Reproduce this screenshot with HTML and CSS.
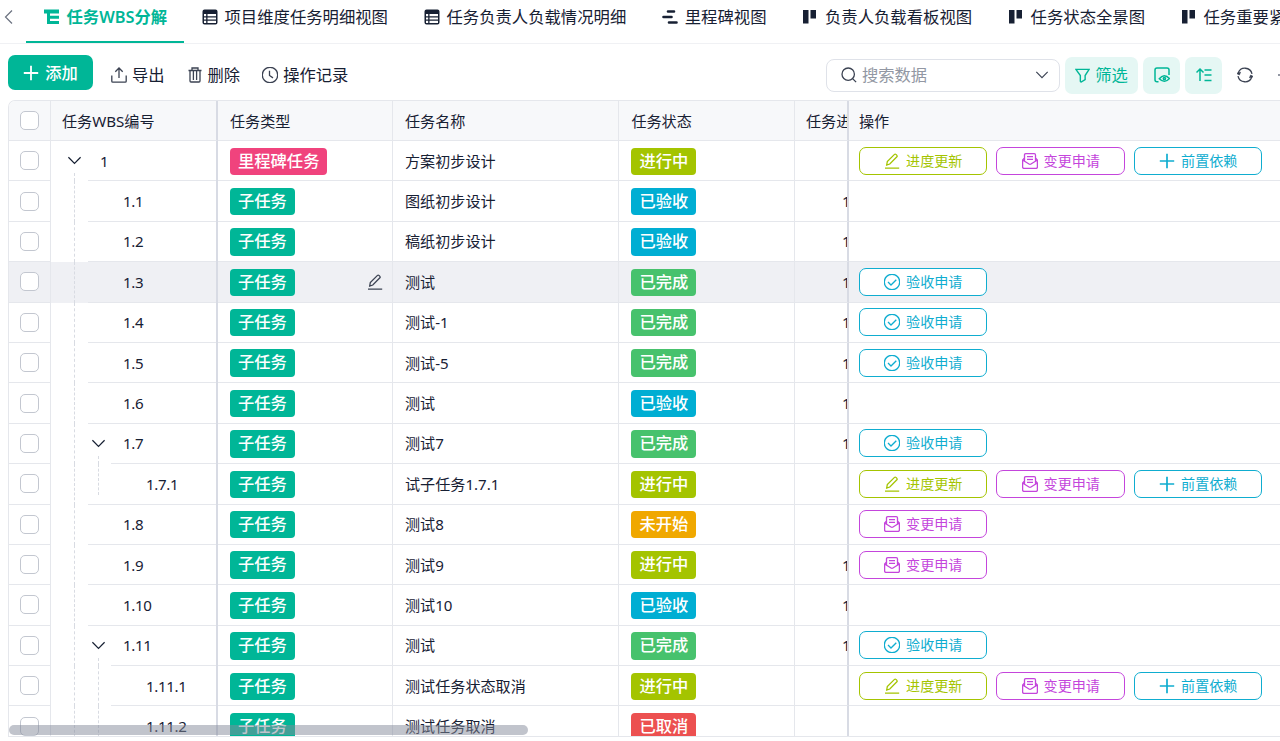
FILE: index.html
```html
<!DOCTYPE html>
<html lang="zh-CN">
<head>
    <meta charset="UTF-8">
    <title>任务WBS分解</title>
    <link rel="stylesheet" href="styles.css">
</head>
<body>
    <svg class="sprite">
        <symbol id="i-tree" viewBox="0 0 16 16"><path d="M0 .5h15v4H6v2.300h9v3H6v2.200h9v3H3V4.500H0z" fill="currentColor"/></symbol>
        <symbol id="i-grid" viewBox="0 0 16 16"><path fill="currentColor" fill-rule="evenodd" d="M2.500.5h11a2 2 0 0 1 2 2v11a2 2 0 0 1-2 2h-11a2 2 0 0 1-2-2v-11a2 2 0 0 1 2-2zM2 5v2.200h2.200V5zm3.500 0v2.200H14V5zM2 8.500v2h2.200v-2zm3.500 0v2H14v-2zM2 11.800V14h2.200v-2.200zm3.500 0V14H14v-2.200z"/></symbol>
        <symbol id="i-gantt" viewBox="0 0 16 16"><path d="M6 2.500h6M1.500 8h8M7 13.500h7.500" fill="none" stroke="currentColor" stroke-width="2.600" stroke-linecap="round"/></symbol>
        <symbol id="i-board" viewBox="0 0 16 16"><path d="M1 1h5.500v13.500H1zM8.500 1H14v8.500H8.500z" fill="currentColor"/></symbol>
        <symbol id="i-plus" viewBox="0 0 16 16"><path d="M8 .8v14.400M.8 8h14.400"/></symbol>
        <symbol id="i-export" viewBox="0 0 16 16"><path d="M8 11V1.200M4.300 4.700L8 1l3.700 3.700M.8 8.500v5.700q0 1 1 1h12.400q1 0 1-1V8.500"/></symbol>
        <symbol id="i-trash" viewBox="0 0 16 16"><path d="M1.500 3.500h13M5 3.500V1h6v2.500M3 3.500V14q0 1 1 1h8q1 0 1-1V3.500M6.400 3.500v9.500M9.600 3.500v9.500"/></symbol>
        <symbol id="i-clock" viewBox="0 0 16 16"><circle cx="8" cy="8" r="7.700"/><path d="M7.500 3.800v4.700l3.500 2.400"/></symbol>
        <symbol id="i-search" viewBox="0 0 16 16"><circle cx="7.200" cy="7.200" r="6.200"/><path d="M11.600 11.600l3.500 3.500"/></symbol>
        <symbol id="i-down" viewBox="0 0 16 16"><path d="M1.500 4.500L8 11l6.500-6.500"/></symbol>
        <symbol id="i-left" viewBox="0 0 16 16"><path d="M11 1.500L4.500 8l6.500 6.500"/></symbol>
        <symbol id="i-filter" viewBox="0 0 16 16"><path d="M1 1.500h14L10.800 8v4.500L6.500 15q-.8 0-.8-.8V8z"/></symbol>
        <symbol id="i-view" viewBox="0 0 16 16"><path d="M4.500 14.800H3q-2 0-2-2V3q0-2 2-2h10q2 0 2 2v5M5.300 11.800q4.700-6 10.200-.3-5 5.500-10.200.3z"/><circle cx="10.400" cy="11.500" r="1.100"/></symbol>
        <symbol id="i-sort" viewBox="0 0 16 16"><path d="M4 14V2.200M.5 5.500L4 2l3.500 3.500M8.500 3h7M8.500 8h7M8.500 13.500h7"/></symbol>
        <symbol id="i-refresh" viewBox="0 0 16 16"><path d="M1.200 6A7.200 7.200 0 0 1 15 6.800M14.800 10A7.200 7.200 0 0 1 1 9.200"/><path d="M-.6 6.300l4.200-1.100-1.200 2.800zM16.600 9.700l-4.200 1.100 1.200-2.800z" fill="currentColor" stroke-width=".6"/></symbol>
        <symbol id="i-edit" viewBox="0 0 16 16"><path d="M1 15.200h14.200M2.700 12l.6-3.400L10.500 1.400q.7-.7 1.400 0l1 1q.7.700 0 1.400L5.800 11z"/></symbol>
        <symbol id="i-mail" viewBox="0 0 16 16"><path d="M2.500 5L.6 7v7q0 1.400 1.400 1.400h12q1.400 0 1.400-1.400V7l-1.900-2M2.500 8.200V2Q2.500.7 3.800.7h8.400q1.300 0 1.300 1.300v6.200M.6 7l6.400 4q1 .7 2 0l6.400-4M5 3.700h6M5 6.300h6"/></symbol>
        <symbol id="i-check" viewBox="0 0 16 16"><circle cx="8" cy="8" r="7.700"/><path d="M4 8l3 3 5.300-5.300"/></symbol>
    </svg>

    <nav class="tabs">
        <svg class="icon tabs-prev"><use href="#i-left"/></svg>
        <div class="tab active"><svg class="icon"><use href="#i-tree"/></svg>任务WBS分解</div>
        <div class="tab"><svg class="icon"><use href="#i-grid"/></svg>项目维度任务明细视图</div>
        <div class="tab"><svg class="icon"><use href="#i-grid"/></svg>任务负责人负载情况明细</div>
        <div class="tab"><svg class="icon"><use href="#i-gantt"/></svg>里程碑视图</div>
        <div class="tab"><svg class="icon"><use href="#i-board"/></svg>负责人负载看板视图</div>
        <div class="tab"><svg class="icon"><use href="#i-board"/></svg>任务状态全景图</div>
        <div class="tab"><svg class="icon"><use href="#i-board"/></svg>任务重要紧急视图</div>
    </nav>

    <div class="toolbar">
        <button class="btn-add"><svg class="icon"><use href="#i-plus"/></svg>添加</button>
        <div class="tool"><svg class="icon"><use href="#i-export"/></svg>导出</div>
        <div class="tool"><svg class="icon"><use href="#i-trash"/></svg>删除</div>
        <div class="tool"><svg class="icon"><use href="#i-clock"/></svg>操作记录</div>
        <div class="search">
            <svg class="icon"><use href="#i-search"/></svg>
            <span>搜索数据</span>
            <svg class="icon arrow"><use href="#i-down"/></svg>
        </div>
        <div class="chip chip-filter"><svg class="icon"><use href="#i-filter"/></svg>筛选</div>
        <div class="chip"><svg class="icon"><use href="#i-view"/></svg></div>
        <div class="chip"><svg class="icon"><use href="#i-sort"/></svg></div>
        <svg class="icon refresh"><use href="#i-refresh"/></svg>
        <span class="more"></span>
    </div>

    <div class="table" id="table">
        <div class="row head">
            <div class="cell check"><i class="box"></i></div>
            <div class="cell wbs">任务WBS编号</div>
            <div class="cell">任务类型</div>
            <div class="cell">任务名称</div>
            <div class="cell">任务状态</div>
            <div class="cell progress">任务进度</div>
            <div class="cell ops">操作</div>
        </div>
        <div class="scrollbar"></div>
    </div>

    <script src="script.js"></script>
</body>
</html>
```
FILE: styles.css
```css
* {
    box-sizing: border-box;
}
body {
    margin: 0;
    width: 1280px;
    height: 741px;
    overflow: hidden;
    background: #fff;
    color: #172033;
    font-family: "Noto Sans", "Noto Sans CJK SC", sans-serif;
    font-size: 15.1px;
}
.sprite {
    display: none;
}
.icon {
    width: 16px;
    height: 16px;
    flex: none;
    fill: none;
    stroke: currentColor;
    stroke-width: 1.3;
    overflow: visible;
}

/* tabs */
.tabs {
    display: flex;
    height: 44px;
    border-bottom: 1px solid #f0f1f4;
    overflow: hidden;
    white-space: nowrap;
}
.tabs-prev {
    margin: 9px 9px 0 1px;
    color: #6b7280;
    stroke-width: 1.2;
}
.tab {
    display: flex;
    align-items: center;
    flex: none;
    height: 44px;
    padding: 0 18px 11px;
    font-size: 16.35px;
    line-height: 24px;
}
.tab .icon {
    margin-right: 6.500px;
    stroke: none;
}
.tab.active {
    width: 158px;
    color: #00b697;
    font-weight: 600;
    border-bottom: 3px solid #00b697;
    padding-bottom: 8px;
}

/* toolbar */
.toolbar {
    display: flex;
    align-items: center;
    height: 56px;
    padding: 6px 0 0 8px;
    font-size: 16.3px;
    line-height: 24px;
    overflow: hidden;
    white-space: nowrap;
}
.btn-add {
    display: flex;
    align-items: center;
    justify-content: center;
    width: 85px;
    height: 35px;
    margin: 0 18px 5px 0;
    padding: 0;
    border: none;
    border-radius: 7px;
    background: #00b697;
    color: #fff;
    font: 500 16.3px/24px "Noto Sans", "Noto Sans CJK SC", sans-serif;
}
.btn-add .icon {
    margin-right: 6px;
    stroke-width: 1.8;
}
.tool {
    display: flex;
    align-items: center;
    margin-right: 22px;
}
.tool .icon {
    margin-right: 5px;
    color: #3b4252;
}
.search {
    display: flex;
    align-items: center;
    width: 234px;
    height: 33px;
    margin-left: auto;
    padding: 0 10px 0 14px;
    border: 1px solid #dfe2e9;
    border-radius: 8px;
    color: #9297a3;
}
.search .icon {
    color: #3b4252;
    margin-right: 5px;
}
.search .arrow {
    width: 14px;
    height: 14px;
    margin: 0 0 0 auto;
}
.chip {
    display: flex;
    align-items: center;
    justify-content: center;
    width: 37px;
    height: 37px;
    margin-left: 5px;
    border-radius: 7px;
    background: #e5f7f4;
    color: #00b697;
}
.chip .icon {
    stroke-width: 1.5;
}
.chip-filter {
    width: 73px;
}
.chip-filter .icon {
    width: 15px;
    height: 15px;
    margin-right: 5px;
}
.refresh {
    margin: 0 25px 0 15px;
    color: #3b4252;
}
.more {
    width: 2px;
    height: 2px;
    background: #9297a3;
}

/* table */
.table {
    position: relative;
    height: 637px;
    margin-left: 8px;
    border: 1px solid #e5e7ec;
    border-right: none;
    border-top-left-radius: 7px;
    overflow: hidden;
}
.row {
    display: grid;
    grid-template-columns: 42px 167px 175px 226.400px 175.600px 54px 1fr;
    height: 40.4px;
}
.row.head {
    height: 40px;
}
.cell {
    display: flex;
    align-items: center;
    min-width: 0;
    overflow: hidden;
    padding: 0 11px 0 12px;
    border-right: 1px solid #e5e7ec;
    border-bottom: 1px solid #e5e7ec;
    white-space: nowrap;
    line-height: 22px;
}
.head {
    background: #f7f8fa;
}
.row.hover {
    background: #eff0f4;
}
.cell.check {
    justify-content: center;
    padding: 0;
}
.box {
    width: 19px;
    height: 19px;
    border: 1px solid #c3c7d0;
    border-radius: 5px;
    background: #fff;
}
.cell.wbs,
.cell.progress {
    border-right: 2px solid #d8dbe4;
}
.cell.wbs {
    padding-left: 11px;
}
.cell.progress {
    padding-left: 11px;
    padding-right: 0;
}
.cell.progress.value {
    padding-left: 47px;
}
.cell.ops {
    border-right: none;
    padding-left: 10px;
    gap: 9px;
}
.cell.tree {
    padding: 0;
    align-items: stretch;
    border-bottom: none;
}
.tree .label {
    flex: 1;
    display: flex;
    align-items: center;
    padding-left: 35px;
    border-bottom: 1px solid #e5e7ec;
    letter-spacing: -.35px;
}
.tree .label.near {
    padding-left: 12px;
}
.guide {
    display: flex;
    flex-direction: column;
    width: 37px;
    padding-left: 15.5px;
}
.guide + .guide {
    width: 23px;
    padding-left: 2.5px;
}
.guide .icon {
    width: 15px;
    height: 15px;
    margin: 12px 0 5px;
}
.guide .line {
    flex: 1;
    width: 0;
    margin-left: 7.5px;
    border-left: 1px dashed #d8dbe2;
}
.guide.end {
    border-bottom: 1px solid #e5e7ec;
    padding-bottom: 9px;
}
.pencil {
    margin-left: auto;
    margin-right: -2px;
    color: #3b4252;
}

.tag {
    height: 27.4px;
    margin-top: 1px;
    padding: 0 8px;
    border-radius: 4px;
    color: #fff;
    font-size: 16.3px;
    font-weight: 500;
    line-height: 27.4px;
}
.pink { background: #f0437d; }
.teal { background: #00b697; }
.lime { background: #a4c400; }
.blue { background: #00aed3; }
.green { background: #47c26d; }
.orange { background: #f0a800; }
.red { background: #ec5050; }

.op {
    display: flex;
    align-items: center;
    justify-content: center;
    width: 128.500px;
    height: 28px;
    border: 1px solid;
    border-radius: 7px;
    background: #fff;
    font-size: 14.1px;
    line-height: 20px;
}
.op .icon {
    margin-right: 6px;
}
.op-update { color: #a4c400; }
.op-change { color: #c445dc; }
.op-dep,
.op-accept { color: #0fadd0; }
.op-dep .icon {
    stroke-width: 1.7;
}

.scrollbar {
    position: absolute;
    left: 0;
    bottom: 1px;
    width: 519px;
    height: 10px;
    border-radius: 5px;
    background: rgba(131, 137, 153, .5);
}
```
FILE: script.js
```js
const types = {
    '里程碑任务': 'pink',
    '子任务': 'teal'
};
const statuses = {
    '进行中': 'lime',
    '已验收': 'blue',
    '已完成': 'green',
    '未开始': 'orange',
    '已取消': 'red'
};
const ops = {
    update: ['i-edit', '进度更新'],
    change: ['i-mail', '变更申请'],
    dep: ['i-plus', '前置依赖'],
    accept: ['i-check', '验收申请']
};

const all = ['update', 'change', 'dep'];
const rows = [
    { no: '1', type: '里程碑任务', name: '方案初步设计', status: '进行中', ops: all, open: true },
    { no: '1.1', name: '图纸初步设计', status: '已验收', done: true },
    { no: '1.2', name: '稿纸初步设计', status: '已验收', done: true },
    { no: '1.3', name: '测试', status: '已完成', done: true, ops: ['accept'], hover: true },
    { no: '1.4', name: '测试-1', status: '已完成', done: true, ops: ['accept'] },
    { no: '1.5', name: '测试-5', status: '已完成', done: true, ops: ['accept'] },
    { no: '1.6', name: '测试', status: '已验收', done: true },
    { no: '1.7', name: '测试7', status: '已完成', done: true, ops: ['accept'], open: true },
    { no: '1.7.1', name: '试子任务1.7.1', status: '进行中', ops: all, last: true },
    { no: '1.8', name: '测试8', status: '未开始', ops: ['change'] },
    { no: '1.9', name: '测试9', status: '进行中', done: true, ops: ['change'] },
    { no: '1.10', name: '测试10', status: '已验收', done: true },
    { no: '1.11', name: '测试', status: '已完成', done: true, ops: ['accept'], open: true },
    { no: '1.11.1', name: '测试任务状态取消', status: '进行中', ops: all },
    { no: '1.11.2', name: '测试任务取消', status: '已取消' }
];

const icon = (id, cls = '') => `<svg class="icon ${cls}"><use href="#${id}"/></svg>`;

function tree(row) {
    const level = row.no.split('.').length - 1;
    let html = '';
    for (let i = 0; i < level; i++) {
        const end = row.last && i === level - 1 ? ' end' : '';
        html += `<div class="guide${end}"><span class="line"></span></div>`;
    }
    if (row.open) {
        html += `<div class="guide">${icon('i-down')}<span class="line"></span></div>`;
    }
    return html + `<div class="label${row.open ? ' near' : ''}">${row.no}</div>`;
}

const scrollbar = document.querySelector('.scrollbar');
rows.forEach(row => {
    const type = row.type || '子任务';
    const buttons = (row.ops || []).map(key =>
        `<div class="op op-${key}">${icon(ops[key][0])}${ops[key][1]}</div>`).join('');
    scrollbar.insertAdjacentHTML('beforebegin', `
        <div class="row${row.hover ? ' hover' : ''}">
            <div class="cell check"><i class="box"></i></div>
            <div class="cell wbs tree">${tree(row)}</div>
            <div class="cell"><span class="tag ${types[type]}">${type}</span>${row.hover ? icon('i-edit', 'pencil') : ''}</div>
            <div class="cell">${row.name}</div>
            <div class="cell"><span class="tag ${statuses[row.status]}">${row.status}</span></div>
            <div class="cell progress value">${row.done ? '100%' : ''}</div>
            <div class="cell ops">${buttons}</div>
        </div>`);
});
```
